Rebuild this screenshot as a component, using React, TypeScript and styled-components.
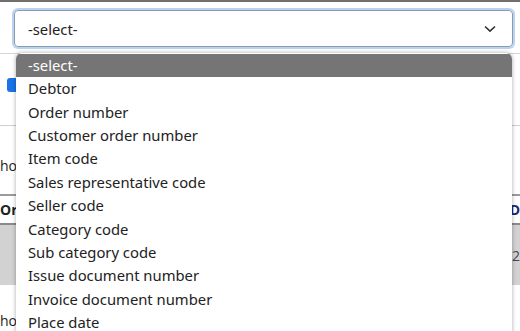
import React from "react";
import styled, { createGlobalStyle } from "styled-components";

const GlobalStyle = createGlobalStyle`
  html, body {
    margin: 0;
    padding: 0;
    background: #ffffff;
    font-family: "Noto Sans", "Open Sans", sans-serif;
    overflow: hidden;
  }
`;

const Page = styled.div`
  position: relative;
  width: 520px;
  height: 331px;
  overflow: hidden;
  background: #ffffff;
  border-top: 2px solid #6f6f6f;
  box-sizing: border-box;
`;

const SelectRow = styled.div`
  padding: 8px 7px 0 14px;
  height: 52px;
  box-sizing: border-box;
  border-bottom: 1px solid #d6d6d6;
`;

const SelectBox = styled.div`
  height: 37px;
  box-sizing: border-box;
  border: 1px solid #8c9bb0;
  border-radius: 4px;
  box-shadow: 0 0 0 2px #b9d3f3;
  display: flex;
  align-items: center;
  justify-content: space-between;
  padding: 0 16px 0 13px;
  font-size: 14.8px;
  color: #222;
`;

const Chevron = () => (
  <svg width="12" height="8" viewBox="0 0 12 8">
    <path d="M1 1.5 L6 6.2 L11 1.5" fill="none" stroke="#333" strokeWidth="1.6" />
  </svg>
);

const Body = styled.div`
  display: flex;
  flex-direction: column;
`;

const CheckRow = styled.div`
  height: 72px;
  padding-top: 24px;
  padding-left: 7px;
  box-sizing: border-box;
  border-bottom: 1px solid #cfcfcf;
`;

const Check = styled.div`
  width: 14px;
  height: 14px;
  border-radius: 3px;
  background: #1a73e8;
`;

const Row = styled.div<{ $h: number; $bg?: string; $line?: string; $bold?: boolean; $pt?: number }>`
  height: ${(p) => p.$h}px;
  box-sizing: border-box;
  padding-top: ${(p) => p.$pt || 0}px;
  background: ${(p) => p.$bg || "transparent"};
  border-bottom: ${(p) => (p.$line ? `2px solid ${p.$line}` : "none")};
  display: flex;
  align-items: center;
  justify-content: space-between;
  font-family: "Open Sans", sans-serif;
  font-size: 14px;
  font-weight: ${(p) => (p.$bold ? 700 : 400)};
  color: #222;
`;

const Edge = styled.span<{ $color?: string }>`
  color: ${(p) => p.$color || "#222"};
`;

const Dropdown = styled.ul`
  position: absolute;
  top: 51px;
  left: 16px;
  width: 496px;
  height: 300px;
  margin: 0;
  padding: 1px 0 0;
  list-style: none;
  background: #ffffff;
  border-radius: 6px 6px 0 0;
  box-shadow: 0 0 4px rgba(0, 0, 0, 0.35);
  overflow: hidden;
`;

const Option = styled.li<{ $active?: boolean }>`
  height: 23.36px;
  line-height: 23.36px;
  padding-left: 12px;
  font-size: 14.8px;
  color: ${(p) => (p.$active ? "#ffffff" : "#222")};
  background: ${(p) => (p.$active ? "#757575" : "transparent")};
  white-space: nowrap;
`;

const options = [
  "-select-",
  "Debtor",
  "Order number",
  "Customer order number",
  "Item code",
  "Sales representative code",
  "Seller code",
  "Category code",
  "Sub category code",
  "Issue document number",
  "Invoice document number",
  "Place date",
];

export default function App() {
  return (
    <Page>
      <GlobalStyle />
      <SelectRow>
        <SelectBox>
          <span>-select-</span>
          <Chevron />
        </SelectBox>
      </SelectRow>
      <Body>
        <CheckRow>
          <Check />
        </CheckRow>
        <Row $h={70} $pt={10} $line="#9a9a9a">
          <Edge>ho</Edge>
        </Row>
        <Row $h={29} $line="#8a8a8a" $bold>
          <Edge>Or</Edge>
          <Edge $color="#1a2a6a">D</Edge>
        </Row>
        <Row $h={60} $bg="#d2d2d2">
          <span />
          <Edge $color="#445">2</Edge>
        </Row>
        <Row $h={60} $pt={10}>
          <Edge>ho</Edge>
        </Row>
      </Body>
      <Dropdown>
        {options.map((o, i) => (
          <Option key={o} $active={i === 0}>
            {o}
          </Option>
        ))}
      </Dropdown>
    </Page>
  );
}
